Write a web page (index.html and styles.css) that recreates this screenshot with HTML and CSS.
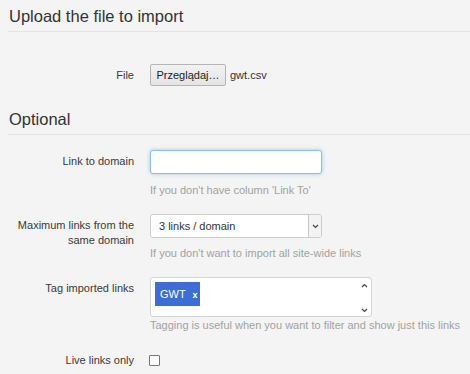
FILE: index.html
```html
<!DOCTYPE html>
<html lang="en">
<head>
  <meta charset="UTF-8">
  <title>Import links</title>
  <link rel="stylesheet" href="styles.css">
</head>
<body>
  <form class="import-form">
    <h2 class="legend">Upload the file to import</h2>

    <div class="form-group file-group">
      <label class="control-label">File</label>
      <div class="controls file-controls">
        <button type="button" class="browse-btn">Przeglądaj…</button>
        <span class="file-name">gwt.csv</span>
      </div>
    </div>

    <h2 class="legend">Optional</h2>

    <div class="form-group first-group">
      <label class="control-label" for="linkDomain">Link to domain</label>
      <div class="controls">
        <input type="text" id="linkDomain" class="text-input focused">
        <p class="help">If you don't have column 'Link To'</p>
      </div>
    </div>

    <div class="form-group">
      <label class="control-label" for="maxLinks">Maximum links from the same domain</label>
      <div class="controls">
        <div class="select-wrap">
          <select id="maxLinks" class="select-input">
            <option>3 links / domain</option>
          </select>
          <span class="select-arrow">
            <svg width="7" height="5" viewBox="0 0 7 5"><path d="M1 1l2.5 2.5L6 1" fill="none" stroke="#444" stroke-width="1.2"/></svg>
          </span>
        </div>
        <p class="help">If you don't want to import all site-wide links</p>
      </div>
    </div>

    <div class="form-group">
      <label class="control-label">Tag imported links</label>
      <div class="controls">
        <div class="tag-box">
          <div class="tag-list">
            <span class="tag">GWT <b class="tag-x">x</b></span>
          </div>
          <div class="tag-scroll">
            <svg width="7" height="5" viewBox="0 0 7 5"><path d="M1 4l2.5-2.5L6 4" fill="none" stroke="#444" stroke-width="1.2"/></svg>
            <svg width="7" height="5" viewBox="0 0 7 5"><path d="M1 1l2.5 2.5L6 1" fill="none" stroke="#444" stroke-width="1.2"/></svg>
          </div>
        </div>
        <p class="help help-tight">Tagging is useful when you want to filter and show just this links</p>
      </div>
    </div>

    <div class="form-group">
      <label class="control-label" for="liveOnly">Live links only</label>
      <div class="controls">
        <input type="checkbox" id="liveOnly" class="check">
      </div>
    </div>
  </form>
</body>
</html>
```

FILE: styles.css
```css
body {
  margin: 0;
  background-color: #f4f4f4;
  font-family: "Liberation Sans", Arial, sans-serif;
  color: #333;
}

.import-form {
  margin: 0;
}

.legend {
  margin: 0 0 0 8px;
  padding: 6px 0 5px 1px;
  font-size: 16.5px;
  font-weight: normal;
  line-height: 20px;
  color: #333;
  border-bottom: 1px solid #e3e3e3;
}

.form-group {
  display: flex;
  align-items: flex-start;
  margin: 16px 0;
}

.file-group {
  margin: 32px 0 17px;
}

.first-group {
  margin-top: 15px;
}

.control-label {
  box-sizing: border-box;
  width: 134px;
  padding: 4px 0 0 14px;
  font-size: 11px;
  line-height: 15px;
  text-align: right;
  color: #3a3a3a;
}

.controls {
  margin-left: 16px;
}

.file-controls {
  display: flex;
  align-items: center;
  gap: 4px;
}

.browse-btn {
  box-sizing: border-box;
  width: 76px;
  height: 22px;
  padding: 0;
  font-family: inherit;
  font-size: 11px;
  color: #222;
  background: linear-gradient(#f2f2f2, #e4e4e4);
  border: 1px solid #b5b5b5;
  border-radius: 2px;
}

.file-name {
  font-size: 11px;
  color: #333;
}

.text-input {
  box-sizing: border-box;
  display: block;
  width: 172px;
  height: 24px;
  margin: 0;
  padding: 2px 6px;
  background: #fff;
  border: 1px solid #ccc;
  border-radius: 3px;
}

.focused {
  border-color: #8ebdea;
  box-shadow: 0 0 4px rgba(102, 175, 233, 0.6);
}

.help {
  margin: 9px 0 0;
  font-size: 11px;
  line-height: 15px;
  color: #a2a2a2;
}

.select-wrap + .help {
  margin-top: 8px;
}

.help-tight {
  margin-top: 1px;
}

.select-wrap {
  position: relative;
  width: 172px;
  height: 24px;
}

.select-input {
  box-sizing: border-box;
  width: 100%;
  height: 24px;
  margin: 0;
  padding: 0 0 0 8px;
  appearance: none;
  -webkit-appearance: none;
  font-family: inherit;
  font-size: 11px;
  color: #333;
  background: #fff;
  border: 1px solid #ccc;
  border-radius: 3px;
}

.select-arrow {
  position: absolute;
  top: 1px;
  right: 1px;
  width: 12px;
  height: 22px;
  display: flex;
  align-items: center;
  justify-content: center;
  background: #f3f3f3;
  border-left: 1px solid #c8c8c8;
  border-radius: 0 2px 2px 0;
}

.tag-box {
  box-sizing: border-box;
  display: flex;
  width: 222px;
  height: 40px;
  background: #fff;
  border: 1px solid #d4d4d4;
  border-radius: 3px;
}

.tag-list {
  flex: 1;
  padding: 4px;
}

.tag {
  display: inline-block;
  box-sizing: border-box;
  width: 45px;
  height: 24px;
  padding: 0 0 0 5px;
  font-size: 11px;
  line-height: 24px;
  color: #fff;
  background: #3b6fd6;
}

.tag-x {
  margin-left: 4px;
  font-size: 9px;
}

.tag-scroll {
  width: 14px;
  display: flex;
  flex-direction: column;
  justify-content: space-between;
  align-items: center;
  padding: 5px 0 3px;
}

.check {
  box-sizing: border-box;
  width: 11px;
  height: 11px;
  margin: 6px 0 0 -1px;
  appearance: none;
  -webkit-appearance: none;
  background: #fff;
  border: 1px solid #777;
  border-radius: 1px;
}
```
